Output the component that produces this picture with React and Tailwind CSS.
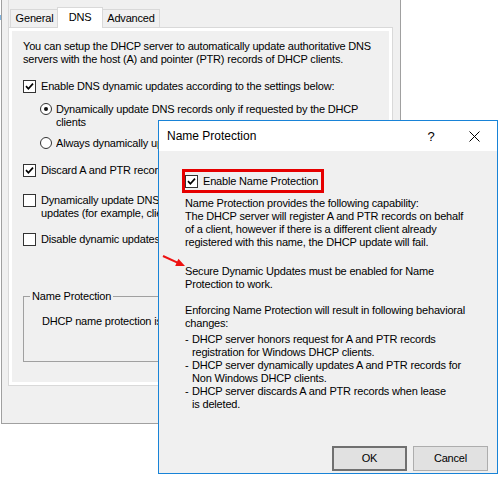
import React from "react";

const F = "font-['Liberation_Sans',Arial,sans-serif]";

function Check({ checked }) {
  return (
    <span className="w-[13px] h-[13px] border border-[#333333] bg-white flex items-center justify-center shrink-0">
      {checked && (
        <svg width="9" height="9" viewBox="0 0 9 9">
          <path d="M1 4.2 L3.4 6.8 L8 1.6" stroke="#000" strokeWidth="1.7" fill="none" />
        </svg>
      )}
    </span>
  );
}

function Radio({ on }) {
  return (
    <span className="w-[12px] h-[12px] rounded-full border border-[#333333] bg-white flex items-center justify-center shrink-0">
      {on && <span className="w-[4px] h-[4px] rounded-full bg-[#111]" />}
    </span>
  );
}

function Btn({ children, def }) {
  return (
    <div
      className={
        "w-[75px] h-[25px] flex items-center justify-center bg-[#e1e1e1] " +
        (def ? "border-2 border-[#707070]" : "border border-[#adadad]")
      }
    >
      {children}
    </div>
  );
}

export default function App() {
  return (
    <div className={"relative w-[501px] h-[478px] bg-white overflow-hidden text-black text-[11px] leading-[13px] tracking-[-0.18px] " + F}>
      {/* back window */}
      <div className="ml-[1px] w-[400px] h-[424px] bg-[#f0f0f0] border-x border-b border-[#a0a0a0]">
        <div className="ml-[6px] w-[385px]">
          {/* tabs */}
          <div className="h-[27px] border-l border-[#d9d9d9] pl-[1px] pt-[7px]">
            <div className="flex items-end h-[20px]">
              <div className="w-[47px] h-[18px] border-l border-t border-[#d9d9d9] bg-[#f0f0f0] flex items-center justify-center pl-[1px]">General</div>
              <div className="relative z-10 w-[46px] h-[21px] -mb-[1px] border-l border-t border-r border-[#d9d9d9] bg-white flex justify-center pt-[3px]">DNS</div>
              <div className="w-[57px] h-[18px] border-t border-r border-[#d9d9d9] bg-[#f0f0f0] flex items-center justify-center">Advanced</div>
            </div>
          </div>
          {/* page */}
          <div className="w-[385px] h-[359px] border border-[#d9d9d9]">
            <div className="h-full border-[3px] border-white bg-[#f0f0f0] pl-[11px] pt-[9px] overflow-hidden whitespace-nowrap">
              <p>
                You can setup the DHCP server to automatically update authoritative DNS
                <br />
                servers with the host (A) and pointer (PTR) records of DHCP clients.
              </p>
              <div className="mt-[14px] flex items-start gap-[5px]">
                <Check checked />
                <span>Enable DNS dynamic updates according to the settings below:</span>
              </div>
              <div className="mt-[10px] ml-[17px] flex items-start gap-[4px]">
                <Radio on />
                <span>
                  Dynamically update DNS records only if requested by the DHCP
                  <br />
                  clients
                </span>
              </div>
              <div className="mt-[8px] ml-[17px] flex items-start gap-[4px]">
                <Radio />
                <span className="w-[102px] overflow-hidden">Always dynamically update DNS records</span>
              </div>
              <div className="mt-[14px] flex items-start gap-[5px]">
                <Check checked />
                <span className="w-[117px] overflow-hidden">Discard A and PTR records when lease is deleted</span>
              </div>
              <div className="mt-[17px] flex items-start gap-[5px]">
                <Check />
                <span className="w-[117px] overflow-hidden">
                  Dynamically update DNS records for DHCP clients that do not request
                  <br />
                  updates (for example, clients running Windows NT 4.0)
                </span>
              </div>
              <div className="mt-[13px] flex items-start gap-[5px]">
                <Check />
                <span className="w-[117px] overflow-hidden">Disable dynamic updates for DNS PTR records</span>
              </div>
              <fieldset className="mt-[44px] w-[359px] h-[72px] border border-[#a0a0a0]">
                <legend className="ml-[6px] px-[2px]">Name Protection</legend>
                <div className="mt-[12px] pl-[18px]">
                  <div className="w-[116px] overflow-hidden">DHCP name protection is disabled at the server level.</div>
                </div>
              </fieldset>
            </div>
          </div>
        </div>
      </div>

      {/* stray edge of a window behind */}
      <div className="absolute left-0 top-[15px] w-[1px] h-[5px] bg-[#7fb4e0]" />

      {/* front dialog */}
      <div className="absolute left-[158px] top-[120px] w-[340px] h-[354px] border border-[#1883d7] bg-[#f0f0f0] flex flex-col">
        <div className="h-[30px] bg-white flex items-center shrink-0">
          <span className="pl-[8px] text-[12px] tracking-normal flex-1">Name Protection</span>
          <span className="w-[40px] text-center text-[13px] tracking-normal">?</span>
          <span className="w-[46px] flex justify-center">
            <svg width="11" height="11" viewBox="0 0 11 11">
              <path d="M0.5 0.5 L10.5 10.5 M10.5 0.5 L0.5 10.5" stroke="#000" strokeWidth="1" fill="none" />
            </svg>
          </span>
        </div>
        <div className="flex-1 pl-[23px] pt-[18px] whitespace-nowrap">
          <div className="w-[142px] h-[24px] border-[3px] border-[#e60000] flex items-center gap-[5px]">
            <Check checked />
            <span>Enable Name Protection</span>
          </div>
          <div className="pl-[3px]">
            <p className="mt-[4px]">
              Name Protection provides the following capability:
              <br />
              The DHCP server will register A and PTR records on behalf
              <br />
              of a client, however if there is a different client already
              <br />
              registered with this name, the DHCP update will fail.
            </p>
            <p className="mt-[16px]">
              Secure Dynamic Updates must be enabled for Name
              <br />
              Protection to work.
            </p>
            <p className="mt-[13px]">
              Enforcing Name Protection will result in following behavioral
              <br />
              changes:
            </p>
            <div className="mt-[3px]">
              <div className="flex">
                <span className="w-[7px]">-</span>
                <span>
                  DHCP server honors request for A and PTR records
                  <br />
                  registration for Windows DHCP clients.
                </span>
              </div>
              <div className="flex">
                <span className="w-[7px]">-</span>
                <span>
                  DHCP server dynamically updates A and PTR records for
                  <br />
                  Non Windows DHCP clients.
                </span>
              </div>
              <div className="flex">
                <span className="w-[7px]">-</span>
                <span>
                  DHCP server discards A and PTR records when lease
                  <br />
                  is deleted.
                </span>
              </div>
            </div>
          </div>
        </div>
        <div className="flex justify-end gap-[6px] pr-[9px] pb-[2px] shrink-0">
          <Btn def>OK</Btn>
          <Btn>Cancel</Btn>
        </div>
      </div>

      {/* annotation arrow */}
      <svg className="absolute left-[160px] top-[250px]" width="30" height="20" viewBox="0 0 30 20">
        <line x1="3" y1="6" x2="17.5" y2="12.6" stroke="#ee1111" strokeWidth="2" />
        <polygon points="25,16 15.2,15.9 18.4,8.7" fill="#ee1111" />
      </svg>
    </div>
  );
}
